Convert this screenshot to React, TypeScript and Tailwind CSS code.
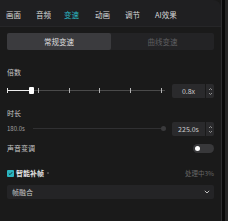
import React from "react";

const font = { fontFamily: '"Noto Sans CJK SC", "Noto Sans", sans-serif' };

function Stepper() {
  return (
    <div className="ml-[1px] w-[8px] bg-[#2a2a2c] rounded-r-[2px] flex items-center justify-center">
      <svg width="5" height="9" viewBox="0 0 5 9">
        <path d="M1 3 L2.5 1.5 L4 3 M1 6 L2.5 7.5 L4 6" stroke="#9a9a9a" strokeWidth="0.9" fill="none" />
      </svg>
    </div>
  );
}

export default function App() {
  const ticks = [38, 69, 99, 130, 161];
  return (
    <div className="w-[228px] h-[221px] bg-[#262626] flex overflow-hidden leading-none" style={font}>
      <div className="w-[222px] h-full bg-[#1a1a1a] flex flex-col border-r border-[#2c2c2e]">
        {/* tabs */}
        <div className="h-[27px] shrink-0 bg-[#1f1f21] rounded-tr-[8px] flex items-center pl-[6px] pt-[3px] text-[7.5px] text-[#d8d8d8] border-b border-[#262628] whitespace-nowrap">
          <span className="w-[30px]">画面</span>
          <span className="w-[28px]">音频</span>
          <span className="w-[31px]"><span className="text-[#2bb5c0]">变速</span></span>
          <span className="w-[30px]">动画</span>
          <span className="w-[30px]">调节</span>
          <span>AI效果</span>
        </div>
        <div className="px-[7px] pt-[6px] flex flex-col">
          {/* segmented */}
          <div className="h-[17px] bg-[#232325] rounded-[2px] flex text-[7.5px]">
            <div className="w-[104px] bg-[#3b3b3e] rounded-[2px] flex items-center justify-center text-[#dedede]">常规变速</div>
            <div className="flex-1 flex items-center justify-center text-[#5e5e60]">曲线变速</div>
          </div>
          {/* 倍数 */}
          <div className="mt-[17px] h-[10px] flex items-center text-[7px] text-[#c8c8c8]">倍数</div>
          <div className="mt-[7px] h-[14px] flex items-center">
            <div className="relative w-[158px] h-[14px]">
              <div className="absolute left-0 right-0 top-[6px] h-[1px] bg-[#4a4a4a]" />
              <div className="absolute left-0 w-[24px] top-[6px] h-[1px] bg-[#eeeeee]" />
              <div className="absolute left-0 top-[4px] w-[1px] h-[5px] bg-[#e8e8e8]" />
              {ticks.map((t, i) => (
                <div key={i} className="absolute top-[4px] w-[1px] h-[5px] bg-[#b5b5b5]" style={{ left: t - 7 }} />
              ))}
              <div className="absolute left-[22px] top-[3px] w-[5px] h-[7px] bg-white rounded-[1px]" />
            </div>
            <div className="ml-[7px] flex h-[14px]">
              <div className="w-[33px] bg-[#2a2a2c] rounded-l-[2px] flex items-center justify-center text-[7px] text-[#d0d0d0]">0.8x</div>
              <Stepper />
            </div>
          </div>
          {/* 时长 */}
          <div className="mt-[10px] h-[10px] flex items-center text-[7px] text-[#c8c8c8]">时长</div>
          <div className="mt-[4px] h-[14px] flex items-center">
            <span className="text-[6px] text-[#a0a0a0] w-[26px]">180.0s</span>
            <div className="relative w-[132px] h-[14px]">
              <div className="absolute left-0 right-[2px] top-[6px] h-[1px] bg-[#303032]" />
              <div className="absolute right-[-1px] top-[4px] w-[5px] h-[5px] rounded-full bg-[#3a3a3c]" />
            </div>
            <div className="ml-[7px] flex h-[14px]">
              <div className="w-[33px] bg-[#2a2a2c] rounded-l-[2px] flex items-center justify-center text-[7px] text-[#d0d0d0]">225.0s</div>
              <Stepper />
            </div>
          </div>
          {/* 声音变调 */}
          <div className="mt-[7px] h-[10px] flex items-center justify-between">
            <span className="text-[7px] text-[#c8c8c8]">声音变调</span>
            <div className="w-[21px] h-[9px] rounded-full bg-[#38383a] flex items-center pl-[2px]">
              <div className="w-[5px] h-[5px] rounded-full bg-white" />
            </div>
          </div>
          {/* 智能补帧 */}
          <div className="mt-[15px] h-[10px] flex items-center justify-between">
            <div className="flex items-center">
              <div className="w-[7px] h-[7px] rounded-[1px] bg-[#2bb5c0] flex items-center justify-center">
                <svg width="5" height="5" viewBox="0 0 5 5"><path d="M0.8 2.5 L2 3.7 L4.2 1.2" stroke="#0f2a2c" strokeWidth="0.9" fill="none" /></svg>
              </div>
              <span className="ml-[2px] text-[7px] font-bold text-[#e4e4e4]">智能补帧</span>
              <span className="ml-[3px] w-[2px] h-[2px] rounded-full bg-[#5a5a5a]" />
            </div>
            <span className="text-[6.5px] text-[#666666]">处理中3%</span>
          </div>
          {/* dropdown */}
          <div className="mt-[7px] h-[14px] bg-[#242426] rounded-[2px] flex items-center justify-between pl-[5px] pr-[4px]">
            <span className="text-[7px] text-[#c8c8c8]">帧融合</span>
            <svg width="6" height="4" viewBox="0 0 6 4"><path d="M0.8 0.8 L3 3 L5.2 0.8" stroke="#c0c0c0" strokeWidth="1" fill="none" /></svg>
          </div>
        </div>
      </div>
      <div className="w-[3px] h-full bg-[#0a0a0a]" />
    </div>
  );
}
